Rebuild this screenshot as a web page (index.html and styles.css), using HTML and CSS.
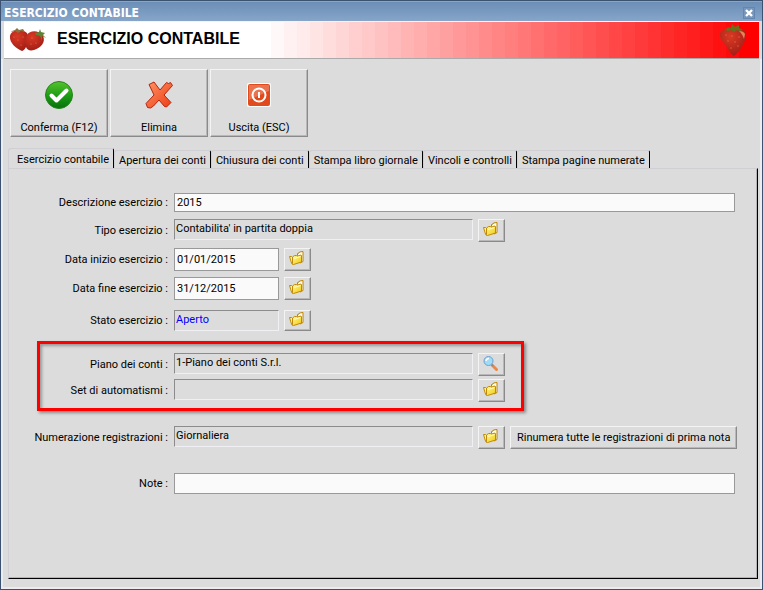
FILE: index.html
```html
<!DOCTYPE html>
<html lang="it">
<head>
  <meta charset="UTF-8" />
  <meta name="viewport" content="width=device-width, initial-scale=1.0"/>
  <title>Esercizio contabile</title>
  <link rel="stylesheet" href="styles.css">
</head>
<body>

  <!-- shared icons -->
  <svg class="icon-defs" aria-hidden="true">
    <defs>
      <linearGradient id="gold" x1="0" y1="0" x2="1" y2="1">
        <stop offset="0" stop-color="#fff98c"/>
        <stop offset="1" stop-color="#f3c811"/>
      </linearGradient>
      <radialGradient id="berryRed" cx="0.4" cy="0.3" r="0.8">
        <stop offset="0" stop-color="#d93a24"/>
        <stop offset="1" stop-color="#9c1a14"/>
      </radialGradient>
      <symbol id="folder" viewBox="0 0 16 16">
        <path d="M8.500 4.500V2.500l1.500-.5.500-1 3.500-.5v10l-3 1.500z" fill="#fffdf0" stroke="#b88208"/>
        <path d="M.5 5.500h2l1 1v7L2.500 12z" fill="#fff3a0" stroke="#c08a00"/>
        <path d="M3.500 6l2-1.500h2l1 .5 3.500-1 .5 1v6l-8 2.500-1-1z" fill="url(#gold)" stroke="#c08a08" stroke-linejoin="round"/>
        <path d="M5 7.500l6.500-2" stroke="#fffbd0" stroke-width="1"/>
      </symbol>
    </defs>
  </svg>

  <div class="window">
    <div class="titlebar">
      <span>ESERCIZIO CONTABILE</span>
      <button type="button" class="close" aria-label="Chiudi">
        <svg width="8" height="8" viewBox="0 0 8 8"><path d="M1 1l6 6M7 1L1 7" stroke="#fff" stroke-width="2.400"/></svg>
      </button>
    </div>

    <header>
      <svg class="berries" width="38" height="26" viewBox="0 0 38 26" aria-hidden="true">
        <path d="M1 9C2 4 8 2 14 4c5 1 6 5 5 10-1 5-3 9-6 10C8 22 0 16 1 9z" fill="url(#berryRed)"/>
        <path d="M18 8c3-5 12-5 16 1 3 6-2 12-9 14-4 1-7 0-8-3-2-4-1-9 1-12z" fill="url(#berryRed)"/>
        <path d="M3 4l3-1 2-2 2 2 4-1 2 3-4-1-3 2-3-2-4 1z" fill="#8b7040"/>
        <path d="M26 6l4-1 1-3 1 3 4 1-2 2 3 3-4-2 0 5-2-5-4-1z" fill="#5f8236"/>
        <g fill="#e8795a"><circle cx="5" cy="10" r=".6"/><circle cx="9" cy="13" r=".6"/><circle cx="14" cy="10" r=".6"/><circle cx="12" cy="18" r=".6"/><circle cx="23" cy="11" r=".6"/><circle cx="22" cy="17" r=".6"/><circle cx="27" cy="16" r=".6"/></g>
      </svg>
      <h1>ESERCIZIO CONTABILE</h1>
      <svg class="berry" width="28" height="34" viewBox="0 0 28 34" aria-hidden="true">
        <path d="M1 10C4 4 23 3 27 9c1 4-1 10-5 16-3 5-6 7-7 8-2-1-5-4-7-9C3 18 0 15 1 10z" fill="url(#berryRed)"/>
        <path d="M20 8c3 0 5 1 6 3l-1 5c-1-3-2-5-5-8z" fill="#e88458"/>
        <path d="M6 7l3-3 3 1 1-4 3 3 4-2 0 3 4 2-4 1-2-1-3 2-3-2-3 1z" fill="#66701d"/>
        <g fill="#e8683f"><circle cx="7" cy="12" r=".7"/><circle cx="13" cy="13" r=".7"/><circle cx="20" cy="14" r=".7"/><circle cx="9" cy="18" r=".7"/><circle cx="16" cy="19" r=".7"/><circle cx="12" cy="25" r=".7"/><circle cx="19" cy="23" r=".7"/></g>
      </svg>
    </header>

    <main>
      <div class="toolbar">
        <button type="button">
          <svg width="28" height="28" viewBox="0 0 28 28" aria-hidden="true">
            <defs><linearGradient id="green" x1="0" y1="0" x2="0" y2="1"><stop offset="0" stop-color="#55c32c"/><stop offset=".55" stop-color="#1c9a14"/><stop offset="1" stop-color="#07700a"/></linearGradient></defs>
            <circle cx="14" cy="14" r="13.500" fill="url(#green)" stroke="#26851c"/>
            <path d="M6.500 14.500l5 5L21.500 9.500" fill="none" stroke="#fff" stroke-width="4" stroke-linecap="round" stroke-linejoin="round"/>
          </svg>
          Conferma (F12)
        </button>
        <button type="button">
          <svg width="28" height="28" viewBox="0 0 28 28" aria-hidden="true">
            <defs><linearGradient id="orange" x1="0" y1="0" x2="1" y2="1"><stop offset="0" stop-color="#ff9468"/><stop offset="1" stop-color="#ee3a10"/></linearGradient></defs>
            <path d="M4 3.500L9 1l6 8L21.500 1.500l2 1 2-1 2 3-8.500 9.500 7 7.500-4.500 4.500-2-.5L14 19l-5.500 6-3 2-3-.5-1.500-4L9 14z" fill="url(#orange)" stroke="#b3260c" stroke-linejoin="round"/>
          </svg>
          Elimina
        </button>
        <button type="button">
          <svg width="28" height="28" viewBox="0 0 28 28" aria-hidden="true">
            <rect x="2" y="2" width="24" height="24" rx="2" fill="#fff"/>
            <rect x="3" y="3" width="22" height="22" rx="2" fill="#e04a1c"/>
            <path d="M4 4h20v6L4 19z" fill="#ea7350"/>
            <circle cx="14" cy="14" r="6.500" fill="none" stroke="#fff" stroke-width="2"/>
            <path d="M14 11v6" stroke="#fff" stroke-width="2"/>
          </svg>
          Uscita (ESC)
        </button>
      </div>

      <div class="tabs" role="tablist">
        <button type="button" role="tab" class="tab active" aria-selected="true">Esercizio contabile</button>
        <button type="button" role="tab" class="tab">Apertura dei conti</button>
        <button type="button" role="tab" class="tab">Chiusura dei conti</button>
        <button type="button" role="tab" class="tab">Stampa libro giornale</button>
        <button type="button" role="tab" class="tab">Vincoli e controlli</button>
        <button type="button" role="tab" class="tab">Stampa pagine numerate</button>
      </div>

      <form class="panel">
        <div class="row short">
          <label for="descrizione">Descrizione esercizio :</label>
          <input type="text" id="descrizione" class="wide" value="2015" />
        </div>
        <div class="row">
          <label for="tipo">Tipo esercizio :</label>
          <input type="text" id="tipo" class="lookup" value="Contabilita' in partita doppia" readonly />
          <button type="button" class="pick" aria-label="Scegli tipo"><svg width="16" height="16"><use href="#folder"/></svg></button>
        </div>
        <div class="row">
          <label for="inizio">Data inizio esercizio :</label>
          <input type="text" id="inizio" class="date" value="01/01/2015" />
          <button type="button" class="pick" aria-label="Scegli data inizio"><svg width="16" height="16"><use href="#folder"/></svg></button>
        </div>
        <div class="row">
          <label for="fine">Data fine esercizio :</label>
          <input type="text" id="fine" class="date" value="31/12/2015" />
          <button type="button" class="pick" aria-label="Scegli data fine"><svg width="16" height="16"><use href="#folder"/></svg></button>
        </div>
        <div class="row state">
          <label for="stato">Stato esercizio :</label>
          <input type="text" id="stato" class="lookup small" value="Aperto" readonly />
          <button type="button" class="pick" aria-label="Scegli stato"><svg width="16" height="16"><use href="#folder"/></svg></button>
        </div>

        <div class="highlight">
          <div class="row">
            <label for="piano">Piano dei conti :</label>
            <input type="text" id="piano" class="lookup" value="1-Piano dei conti S.r.l." readonly />
            <button type="button" class="pick" aria-label="Cerca piano dei conti">
              <svg width="16" height="16" viewBox="0 0 16 16">
                <path d="M9.500 9.500l4 4" stroke="#e8894a" stroke-width="3" stroke-linecap="round"/>
                <path d="M8 8l2 2" stroke="#8d8d8d" stroke-width="2"/>
                <circle cx="5.500" cy="5" r="4.500" fill="#9fdcf7" stroke="#6c9fd0"/>
                <path d="M3 5a3 3 0 0 1 3-2.500" fill="none" stroke="#fff" stroke-width="1.500"/>
              </svg>
            </button>
          </div>
          <div class="row">
            <label for="automatismi">Set di automatismi :</label>
            <input type="text" id="automatismi" class="lookup" readonly />
            <button type="button" class="pick" aria-label="Scegli set di automatismi"><svg width="16" height="16"><use href="#folder"/></svg></button>
          </div>
        </div>

        <div class="row">
          <label for="numerazione">Numerazione registrazioni :</label>
          <input type="text" id="numerazione" class="lookup" value="Giornaliera" readonly />
          <button type="button" class="pick" aria-label="Scegli numerazione"><svg width="16" height="16"><use href="#folder"/></svg></button>
          <button type="button" class="renumber">Rinumera tutte le registrazioni di prima nota</button>
        </div>
        <div class="row notes">
          <label for="note">Note :</label>
          <input type="text" id="note" class="wide" />
        </div>
      </form>
    </main>
  </div>

</body>
</html>
```
FILE: styles.css
```css
* {
  box-sizing: border-box;
}

body {
  margin: 0;
  font-family: Tahoma, Roboto, sans-serif;
  font-size: 11px;
  color: #000;
  background: #dcdcdc;
}

button,
input {
  font: inherit;
  color: inherit;
  margin: 0;
}

.icon-defs {
  position: absolute;
  width: 0;
  height: 0;
}

.window {
  display: flex;
  flex-direction: column;
  min-height: 100vh;
  border: 1px solid #3b5270;
}

.titlebar {
  display: flex;
  justify-content: space-between;
  align-items: center;
  height: 20px;
  padding: 3px 7px 0 3px;
  background: linear-gradient(#6c8fb8, #86a5c8);
  border-top: 1px solid #8aa6c6;
  color: #fff;
  font-family: Tahoma, "DejaVu Sans Condensed", "Noto Sans", sans-serif;
  font-size: 12px;
  font-weight: bold;
}

.close {
  display: flex;
  align-items: center;
  justify-content: center;
  width: 12px;
  height: 12px;
  padding: 0;
  border: 1px solid #6487b0;
  background: #7796bb;
}

/* banded fade, one step every 13px */
header {
  display: flex;
  align-items: center;
  height: 38px;
  margin: 0 3px;
  padding: 0 12px 0 5px;
  border-top: 1px solid #f4f4f4;
  border-bottom: 1px solid #aaa;
  background: linear-gradient(to right,
    #fff 0 267px, #fff8f8 0 280px, #fff1f1 0 293px, #ffebeb 0 306px,
    #ffe4e4 0 319px, #ffdddd 0 332px, #ffd6d6 0 345px, #ffcfcf 0 358px,
    #ffc9c9 0 371px, #ffc2c2 0 384px, #ffbbbb 0 397px, #ffb4b4 0 410px,
    #ffadad 0 423px, #ffa7a7 0 436px, #ffa0a0 0 449px, #ff9999 0 462px,
    #ff9292 0 475px, #ff8b8b 0 488px, #ff8585 0 501px, #ff7e7e 0 514px,
    #ff7777 0 527px, #ff7070 0 540px, #ff6969 0 553px, #ff6363 0 566px,
    #ff5c5c 0 579px, #ff5555 0 592px, #ff4e4e 0 605px, #ff4747 0 618px,
    #ff4141 0 631px, #ff3a3a 0 644px, #ff3333 0 657px, #ff2c2c 0 670px,
    #ff2525 0 683px, #ff1f1f 0 696px, #ff1818 0 709px, #ff1111 0 722px,
    #ff0a0a 0 735px, #f00 0);
}

header h1 {
  flex: 1;
  margin: 0 0 0 10px;
  font-family: Arial, "Liberation Sans", sans-serif;
  font-size: 16px;
  line-height: 20px;
  padding-bottom: 2px;
}

main {
  flex: 1;
  display: flex;
  flex-direction: column;
  padding: 10px 2px 8px 5px;
  border: solid #ececf0;
  border-width: 0 2px 2px;
}

.toolbar {
  display: flex;
  gap: 2px;
  padding-left: 2px;
}

.toolbar button {
  display: flex;
  flex-direction: column;
  align-items: center;
  justify-content: space-between;
  width: 98px;
  height: 68px;
  padding: 11px 0 2px;
}

.toolbar button,
.pick,
.renumber {
  border: 1px solid;
  border-color: #f4f4f4 #8a8a8a #8a8a8a #f4f4f4;
  box-shadow: inset -1px -1px #b8b8b8;
  background: #dcdcdc;
}

.tabs {
  display: flex;
  align-items: flex-end;
  margin-top: 11px;
}

.tab {
  height: 18px;
  padding: 2px 4px 0;
  border: 1px solid #cfcfd4;
  border-right: 1px solid #000;
  border-bottom: none;
  border-radius: 3px 2px 0 0;
  background: #dcdcdc;
}

.tab.active {
  height: 20px;
  padding: 2px 4px 0 8px;
}

.panel {
  flex: 1;
  padding: 24px 22px 24px 0;
  border: 1px solid;
  border-color: #cfcfd4 #000 #000 #cfcfd4;
  box-shadow: inset -1px -1px #b4b4b4;
}

.row {
  display: flex;
  align-items: center;
  gap: 5px;
  height: 23px;
  margin-top: 6px;
}

.row.short {
  height: 19px;
  margin: 0 0 7px;
}

.row.state {
  height: 21px;
  margin-top: 10px;
}

.row.notes {
  height: 21px;
  margin-top: 24px;
}

.row label {
  flex: none;
  width: 160px;
  padding-right: 1px;
  text-align: right;
  white-space: nowrap;
}

.row input {
  height: 100%;
  padding: 0 2px;
  border: 1px solid #999;
  border-radius: 0;
  background: #fafafa;
  outline: none;
}

.row .wide {
  flex: 1;
  min-width: 0;
}

.row .date {
  width: 105px;
}

.row .lookup {
  flex: none;
  align-self: flex-start;
  width: 299px;
  height: 21px;
  padding: 0 0 3px 1px;
  border-color: #8c8c8c #f0f0f4 #f0f0f4 #8c8c8c;
  background: #dcdcdc;
}

.row .small {
  width: 105px;
  color: #00f;
}

.pick {
  flex: none;
  display: flex;
  align-items: center;
  justify-content: center;
  width: 27px;
  height: 100%;
  padding: 0 1px 1px 0;
}

.renumber {
  height: 100%;
  padding: 0 6px;
  white-space: nowrap;
}

.highlight {
  width: fit-content;
  margin: 10px 0 15px 28px;
  padding: 9px 16px 6px 0;
  border: 3px solid #f00;
  box-shadow: 2px 2px 3px #888, inset 2px 2px 3px #999;
}

.highlight label {
  width: 129px;
}

.highlight .row {
  margin-top: 3px;
}

.highlight .row:first-child {
  margin-top: 0;
}
```
